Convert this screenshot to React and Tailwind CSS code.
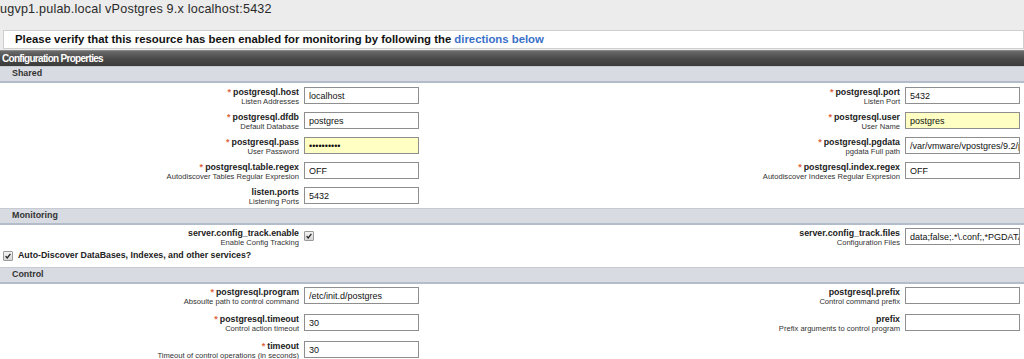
const sans = { fontFamily: '"Liberation Sans", Arial, sans-serif' }

function Check() {
  return (
    <span className="inline-flex w-[10px] h-[10px] items-center justify-center border border-[#9a9a9a] bg-gradient-to-b from-[#f4f4f4] to-[#d6d6d6] rounded-[1px]">
      <svg viewBox="0 0 10 10" className="w-[8px] h-[8px]">
        <path d="M2 5.2 L4 7.4 L8 2.4" fill="none" stroke="#222" strokeWidth="1.6" />
      </svg>
    </span>
  )
}

function Label({ name, desc, req }) {
  return (
    <div className="text-right leading-none">
      <div className="text-[8.8px] font-bold text-[#222] leading-[10px]">
        {req && <span className="text-[#e0643c] mr-[2px] text-[9px]">*</span>}
        {name}
      </div>
      <div className="text-[7.6px] text-[#333] leading-[9px]">{desc}</div>
    </div>
  )
}

function Box({ value, yellow, password }) {
  return (
    <input
      readOnly
      type={password ? 'password' : 'text'}
      value={value || ''}
      className={`block w-[115px] h-[17px] border border-[#8e8e8e] pl-[4px] text-[9px] text-[#111] outline-none ${yellow ? 'bg-[#ffffc4]' : 'bg-white'}`}
      style={sans}
    />
  )
}

function Field({ f, left }) {
  if (!f) return <div className={left ? 'w-[512px]' : 'flex-1'} />
  const control = f.check ? (
    <div className="ml-[5px] pt-[3px] flex"><Check /></div>
  ) : (
    <div className="ml-[5px]"><Box value={f.value} yellow={f.yellow} password={f.password} /></div>
  )
  if (left) {
    return (
      <div className="w-[512px] flex items-start">
        <div className="w-[299px] flex justify-end"><Label name={f.name} desc={f.desc} req={f.req} /></div>
        {control}
      </div>
    )
  }
  return (
    <div className="flex-1 flex items-start justify-end pr-[4px]">
      <Label name={f.name} desc={f.desc} req={f.req} />
      {control}
    </div>
  )
}

function SectionBar({ title }) {
  return (
    <div className="h-[17px] bg-[#d8dbe1] border-t border-[#c6cbd3] border-b-2 border-b-[#b3bccb] flex items-center pl-[12px]">
      <span className="text-[8.9px] font-bold text-[#333]">{title}</span>
    </div>
  )
}

const shared = [
  [
    { name: 'postgresql.host', desc: 'Listen Addresses', req: true, value: 'localhost' },
    { name: 'postgresql.port', desc: 'Listen Port', req: true, value: '5432' },
  ],
  [
    { name: 'postgresql.dfdb', desc: 'Default Database', req: true, value: 'postgres' },
    { name: 'postgresql.user', desc: 'User Name', req: true, value: 'postgres', yellow: true },
  ],
  [
    { name: 'postgresql.pass', desc: 'User Password', req: true, value: 'postgres12', yellow: true, password: true },
    { name: 'postgresql.pgdata', desc: 'pgdata Full path', req: true, value: '/var/vmware/vpostgres/9.2/pgdata' },
  ],
  [
    { name: 'postgresql.table.regex', desc: 'Autodiscover Tables Regular Expresion', req: true, value: 'OFF' },
    { name: 'postgresql.index.regex', desc: 'Autodiscover Indexes Regular Expresion', req: true, value: 'OFF' },
  ],
  [
    { name: 'listen.ports', desc: 'Listening Ports', value: '5432' },
    null,
  ],
]

const control = [
  [
    { name: 'postgresql.program', desc: 'Absoulte path to control command', req: true, value: '/etc/init.d/postgres' },
    { name: 'postgresql.prefix', desc: 'Control command prefix' },
  ],
  [
    { name: 'postgresql.timeout', desc: 'Control action timeout', req: true, value: '30' },
    { name: 'prefix', desc: 'Prefix arguments to control program' },
  ],
  [
    { name: 'timeout', desc: 'Timeout of control operations (in seconds)', req: true, value: '30' },
    null,
  ],
]

function Rows({ rows, gap }) {
  return (
    <div className={`flex flex-col ${gap}`}>
      {rows.map((r, i) => (
        <div key={i} className="flex h-[17px]">
          <Field f={r[0]} left />
          <Field f={r[1]} />
        </div>
      ))}
    </div>
  )
}

export default function App() {
  return (
    <div className="w-[1024px] h-[359px] overflow-hidden bg-[#ececec]" style={sans}>
      <div className="h-[30px] pt-[3px] text-[12.6px] text-[#2a2a2a] leading-[13px] tracking-[0.2px]">
        ugvp1.pulab.local vPostgres 9.x localhost:5432
      </div>
      <div className="ml-[3px] h-[19px] bg-white border border-[#cfcfcf] flex items-center pl-[11px]">
        <span className="text-[11.35px] font-bold text-[#111]">
          Please verify that this resource has been enabled for monitoring by following the{' '}
          <span className="text-[#3a6fc8]">directions below</span>
        </span>
      </div>
      <div className="mt-[1px] h-[16px] bg-gradient-to-b from-[#6a6a6a] via-[#4a4a4a] to-[#3a3a3a] border-t border-[#8a8a8a] flex items-center pl-[2px]">
        <span className="text-[10px] font-bold text-white tracking-[-0.7px]" style={{ fontFamily: '"Liberation Sans Narrow", "Arial Narrow", "Liberation Sans", sans-serif' }}>
          Configuration Properties
        </span>
      </div>
      <SectionBar title="Shared" />
      <div className="bg-white pt-[4px] pb-[4px]">
        <Rows rows={shared} gap="gap-[8px]" />
      </div>
      <SectionBar title="Monitoring" />
      <div className="bg-white pt-[3px]">
        <div className="flex h-[17px]">
          <Field f={{ name: 'server.config_track.enable', desc: 'Enable Config Tracking', check: true }} left />
          <Field f={{ name: 'server.config_track.files', desc: 'Configuration Files', value: 'data;false;.*\\.conf;,*PGDATA*' }} />
        </div>
        <div className="h-[22px] flex items-center pl-[3px] gap-[5px]">
          <Check />
          <span className="text-[8.8px] font-bold text-[#222]">Auto-Discover DataBases, Indexes, and other services?</span>
        </div>
      </div>
      <SectionBar title="Control" />
      <div className="bg-white pt-[3px] h-[100px]">
        <Rows rows={control} gap="gap-[10px]" />
      </div>
    </div>
  )
}
